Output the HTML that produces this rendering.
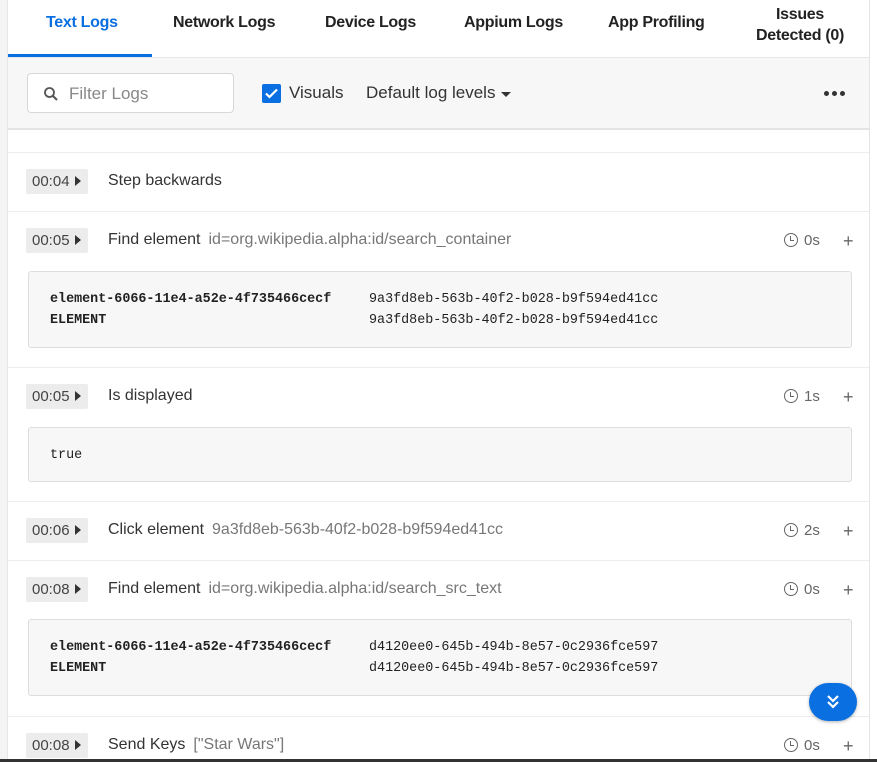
<!DOCTYPE html>
<html><head><meta charset="utf-8"><style>
*{box-sizing:border-box;margin:0;padding:0}
body{width:877px;height:762px;overflow:hidden;background:#fff;font-family:"Liberation Sans",sans-serif;color:#333;position:relative}
.lstrip{position:absolute;left:0;top:0;width:8px;height:762px;background:#f4f4f4;border-right:1px solid #e6e6e6}
.rline{position:absolute;left:869px;top:0;width:1px;height:762px;background:#e4e4e4}
.tab{position:absolute;font-size:16px;font-weight:bold;color:#222;text-align:center;letter-spacing:-0.3px}
.bar{position:absolute;left:8px;top:57px;width:861px;height:73px;background:#f7f7f7;border-top:1px solid #e8e8e8;border-bottom:2px solid #e4e4e4}
.sep{position:absolute;left:8px;width:861px;height:1px;background:#ececec}
.ts{position:absolute;left:26px;width:62px;height:25px;background:#ececec;border-radius:2px;font-size:15px;color:#444;line-height:25px;padding-left:6px}
.ts:after{content:"";position:absolute;left:49px;top:7px;border-left:6px solid #333;border-top:5px solid transparent;border-bottom:5px solid transparent}
.lbl{position:absolute;left:108px;font-size:16px;color:#333;white-space:nowrap}
.lbl span{color:#777;margin-left:8px}
.dur{position:absolute;left:784px;font-size:15px;color:#666}
.dur i{display:inline-block;width:14px;height:14px;border:1.5px solid #666;border-radius:50%;vertical-align:-2px;margin-right:6px;position:relative}
.dur i:after{content:"";position:absolute;left:5px;top:2px;width:3px;height:4px;border-left:1.5px solid #666;border-bottom:1.5px solid #666}
.plus{position:absolute;left:843px;font-size:18px;color:#666}
.code{position:absolute;left:28px;width:824px;background:#f7f7f7;border:1px solid #ddd;border-radius:3px;font-family:"Liberation Mono",monospace;font-size:13.4px;color:#222;line-height:21px;padding-left:21px}
.code b{display:inline-block;width:319px}
</style></head><body>
<div class="lstrip"></div><div class="rline"></div>
<div class="tab" style="left:46px;top:14px;color:#0a6fe0">Text Logs</div>
<div style="position:absolute;left:8px;top:54px;width:144px;height:3px;background:#0a6fe0"></div>
<div class="tab" style="left:173px;top:14px">Network Logs</div>
<div class="tab" style="left:325px;top:14px">Device Logs</div>
<div class="tab" style="left:464px;top:14px">Appium Logs</div>
<div class="tab" style="left:608px;top:14px">App Profiling</div>
<div class="tab" style="left:750px;top:4px;width:100px;line-height:21px">Issues<br>Detected (0)</div>
<div class="bar">
 <div style="position:absolute;left:19px;top:15px;width:207px;height:40px;background:#fff;border:1px solid #d8d8d8;border-radius:4px">
  <svg style="position:absolute;left:15px;top:12px" width="16" height="16" viewBox="0 0 16 16"><circle cx="6.5" cy="6.5" r="4.5" fill="none" stroke="#555" stroke-width="1.8"/><path d="M10 10l4 4" stroke="#555" stroke-width="2"/></svg>
  <span style="position:absolute;left:41px;top:10px;font-size:17px;color:#888">Filter Logs</span>
 </div>
 <div style="position:absolute;left:254px;top:26px;width:19px;height:19px;background:#0a6fe0;border-radius:2px"><svg width="19" height="19" viewBox="0 0 19 19"><path d="M4 9.5l3.5 3.5L15 5.5" fill="none" stroke="#fff" stroke-width="2.2"/></svg></div>
 <span style="position:absolute;left:281px;top:25px;font-size:17px;color:#333">Visuals</span>
 <span style="position:absolute;left:358px;top:25px;font-size:17px;color:#333">Default log levels</span>
 <div style="position:absolute;left:493px;top:34px;border-top:5px solid #333;border-left:5px solid transparent;border-right:5px solid transparent"></div>
 <div style="position:absolute;left:816px;top:33px">
  <span style="position:absolute;left:0;top:0;width:5px;height:5px;border-radius:50%;background:#333"></span>
  <span style="position:absolute;left:8px;top:0;width:5px;height:5px;border-radius:50%;background:#333"></span>
  <span style="position:absolute;left:16px;top:0;width:5px;height:5px;border-radius:50%;background:#333"></span>
 </div>
</div>
<div class="sep" style="top:152px"></div>
<div class="ts" style="top:169px">00:04</div><div class="lbl" style="top:172px">Step backwards</div>
<div class="sep" style="top:211px"></div>
<div class="ts" style="top:228px">00:05</div><div class="lbl" style="top:231px">Find element<span>id=org.wikipedia.alpha:id/search_container</span></div>
<div class="dur" style="top:232px"><i></i>0s</div><div class="plus" style="top:231px">+</div>
<div class="code" style="top:271px;height:77px;padding-top:17px"><b>element-6066-11e4-a52e-4f735466cecf</b>9a3fd8eb-563b-40f2-b028-b9f594ed41cc<br><b>ELEMENT</b>9a3fd8eb-563b-40f2-b028-b9f594ed41cc</div>
<div class="sep" style="top:367px"></div>
<div class="ts" style="top:384px">00:05</div><div class="lbl" style="top:387px">Is displayed</div>
<div class="dur" style="top:388px"><i></i>1s</div><div class="plus" style="top:387px">+</div>
<div class="code" style="top:427px;height:55px;padding-top:17px">true</div>
<div class="sep" style="top:501px"></div>
<div class="ts" style="top:518px">00:06</div><div class="lbl" style="top:521px">Click element<span>9a3fd8eb-563b-40f2-b028-b9f594ed41cc</span></div>
<div class="dur" style="top:522px"><i></i>2s</div><div class="plus" style="top:521px">+</div>
<div class="sep" style="top:560px"></div>
<div class="ts" style="top:577px">00:08</div><div class="lbl" style="top:580px">Find element<span>id=org.wikipedia.alpha:id/search_src_text</span></div>
<div class="dur" style="top:581px"><i></i>0s</div><div class="plus" style="top:580px">+</div>
<div class="code" style="top:619px;height:77px;padding-top:17px"><b>element-6066-11e4-a52e-4f735466cecf</b>d4120ee0-645b-494b-8e57-0c2936fce597<br><b>ELEMENT</b>d4120ee0-645b-494b-8e57-0c2936fce597</div>
<div class="sep" style="top:716px"></div>
<div class="ts" style="top:733px">00:08</div><div class="lbl" style="top:736px">Send Keys<span>["Star Wars"]</span></div>
<div class="dur" style="top:737px"><i></i>0s</div><div class="plus" style="top:736px">+</div>
<div style="position:absolute;left:809px;top:683px;width:48px;height:38px;border-radius:19px;background:#0a6fe0;box-shadow:0 1px 3px rgba(0,0,0,.3)">
 <svg style="position:absolute;left:16px;top:11px" width="16" height="16" viewBox="0 0 16 16"><path d="M3 2l5 5 5-5M3 8l5 5 5-5" fill="none" stroke="#fff" stroke-width="2.2"/></svg>
</div>
<div style="position:absolute;left:0;top:759px;width:877px;height:3px;background:#333"></div>
</body></html>
